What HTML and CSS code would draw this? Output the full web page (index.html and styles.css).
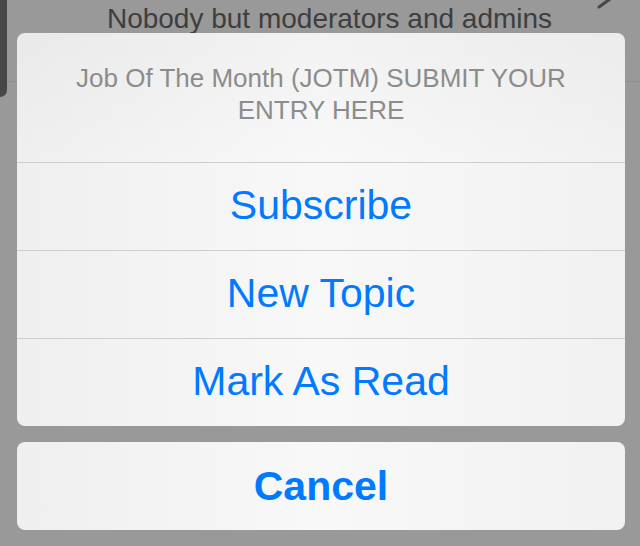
FILE: index.html
```html
<!DOCTYPE html>
<html lang="en">
<head>
    <meta charset="UTF-8">
    <meta name="viewport" content="width=device-width, initial-scale=1.0">
    <title>Forum Actions</title>
    <link rel="stylesheet" href="styles.css">
</head>
<body>

    <!-- Page behind the sheet -->
    <div class="page">
        <div class="side-tab"></div>
        <div class="page-row">
            <span>Nobody but moderators and admins</span>
            <svg class="chevron" width="16" height="12" viewBox="0 0 16 12">
                <path d="M2 10 L13 2" stroke="#474747" stroke-width="3" stroke-linecap="round" fill="none"/>
            </svg>
        </div>
    </div>

    <!-- Action sheet -->
    <div class="sheet">
        <div class="group">
            <div class="sheet-title">Job Of The Month (JOTM) SUBMIT YOUR ENTRY HERE</div>
            <button type="button" class="action">Subscribe</button>
            <button type="button" class="action">New Topic</button>
            <button type="button" class="action">Mark As Read</button>
        </div>
        <div class="group">
            <button type="button" class="action cancel">Cancel</button>
        </div>
    </div>

</body>
</html>
```

FILE: styles.css
```css
html, body {
    margin: 0;
    padding: 0;
}
body {
    font-family: "Liberation Sans", Arial, sans-serif;
    background-color: #999999;
    width: 640px;
    height: 546px;
    overflow: hidden;
    position: relative;
}
.page {
    display: flex;
    align-items: flex-start;
}
.side-tab {
    width: 7px;
    height: 97px;
    background-color: #474747;
    border-bottom-right-radius: 8px;
    flex-shrink: 0;
}
.page-row {
    flex: 1;
    height: 82px;
    border-bottom: 1px solid #8f8f8f;
    position: relative;
    text-align: center;
    padding-left: 12px;
    box-sizing: border-box;
}
.page-row span {
    display: block;
    font-size: 28px;
    line-height: 28px;
    margin-top: 5px;
    color: #3e3e3e;
}
.chevron {
    position: absolute;
    right: 27px;
    top: -3px;
}
.sheet {
    position: absolute;
    left: 17px;
    width: 608px;
    bottom: 16px;
    display: flex;
    flex-direction: column;
    gap: 16px;
}
.group {
    display: flex;
    flex-direction: column;
    border-radius: 8px;
    overflow: hidden;
    background: linear-gradient(to right, #efefef, #f8f8f8 50%, #f1f1f1);
}
.sheet-title {
    padding: 29px 40px 36px;
    font-size: 26px;
    line-height: 32px;
    text-align: center;
    color: #8c8c8c;
    background: linear-gradient(to bottom, rgba(0, 0, 0, 0.025), rgba(0, 0, 0, 0));
}
.action {
    display: block;
    width: 100%;
    margin: 0;
    padding: 0 0 3px;
    height: 88px;
    line-height: 84px;
    border: none;
    border-top: 1px solid #cecece;
    background: transparent;
    font-family: "Liberation Sans", Arial, sans-serif;
    font-size: 41px;
    color: #007aff;
    text-align: center;
    cursor: pointer;
}
.cancel {
    border-top: none;
    padding: 0;
    line-height: 88px;
    font-weight: bold;
}
```
